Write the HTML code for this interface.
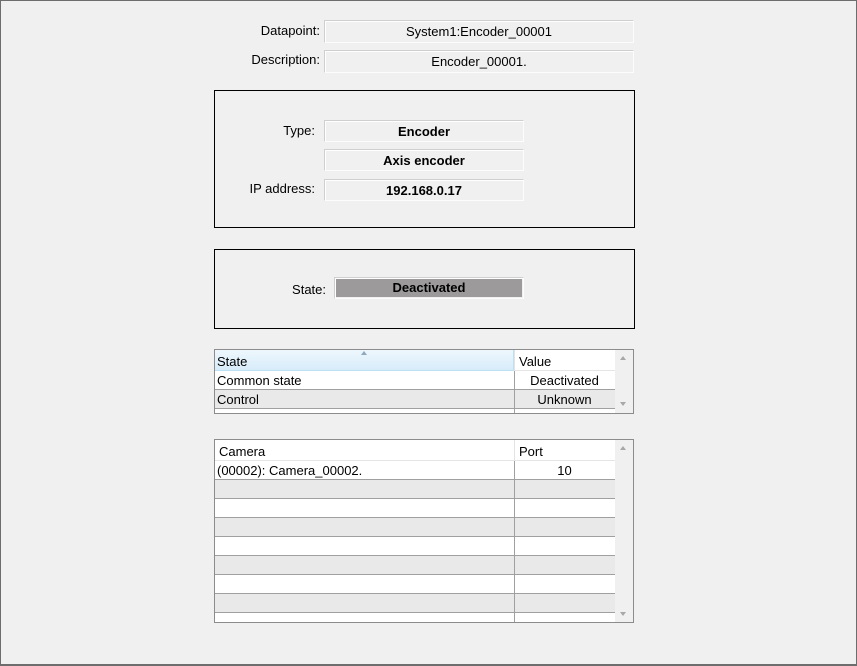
<!DOCTYPE html>
<html><head><style>
*{margin:0;padding:0;box-sizing:border-box}
body{width:857px;height:666px;background:#f0f0f0;font-family:"Liberation Sans",Arial,sans-serif;font-size:13px;color:#000;position:relative;overflow:hidden}
.frame{position:absolute;left:0;top:0;width:857px;height:666px;border:1px solid #6d6d6d;border-bottom-width:2px}
.a{position:absolute}
.lbl{position:absolute;text-align:right;font-size:13px}
.fld{position:absolute;border:1px solid #cfcfcf;border-right-color:#fcfcfc;border-bottom-color:#fcfcfc;box-shadow:inset 1px 1px 0 #fff;background:#f0f0f0;text-align:center;font-size:13px}
.b{font-weight:bold;font-size:13px}
.box{position:absolute;border:1px solid #000}
.tbl{position:absolute;border:1px solid #8c8c8c;background:#f0f0f0;overflow:hidden}
.row{position:absolute;left:0;width:400px;height:19px;border-bottom:1px solid #a0a0a0;font-size:13px;line-height:20px}
.c1{position:absolute;left:2px;top:0}
.c2{position:absolute;left:299px;width:100px;top:0;text-align:center;height:19px;border-left:1px solid #a0a0a0}
.sb{position:absolute;right:0;top:0;width:18px;bottom:0;background:#f0f0f0}
.arr{position:absolute;left:5px;width:0;height:0;border-left:3.5px solid transparent;border-right:3.5px solid transparent}
</style></head><body>
<div class="frame"></div>

<div class="lbl" style="left:220px;top:23px;width:100px">Datapoint:</div>
<div class="fld" style="left:324px;top:20px;width:310px;height:23px;line-height:21px">System1:Encoder_00001</div>
<div class="lbl" style="left:210px;top:52px;width:110px">Description:</div>
<div class="fld" style="left:324px;top:50px;width:310px;height:23px;line-height:21px">Encoder_00001.</div>

<div class="box" style="left:214px;top:90px;width:421px;height:138px"></div>
<div class="lbl" style="left:230px;top:123px;width:85px">Type:</div>
<div class="fld b" style="left:324px;top:120px;width:200px;height:22px;line-height:21px">Encoder</div>
<div class="fld b" style="left:324px;top:149px;width:200px;height:22px;line-height:21px">Axis encoder</div>
<div class="lbl" style="left:215px;top:181px;width:100px">IP address:</div>
<div class="fld b" style="left:324px;top:179px;width:200px;height:22px;line-height:21px">192.168.0.17</div>

<div class="box" style="left:214px;top:249px;width:421px;height:80px"></div>
<div class="lbl" style="left:256px;top:282px;width:70px">State:</div>
<div class="fld" style="left:334px;top:277px;width:190px;height:22px;padding:1px"><div class="b" style="background:#9c9a9a;height:18px;line-height:18px">Deactivated</div></div>

<div class="tbl" style="left:214px;top:349px;width:420px;height:65px">
  <div class="a" style="left:0;top:0;width:299px;height:21px;background:linear-gradient(#eef7fd,#d7ecf9);border-right:1px solid #bde0f5;border-bottom:1px solid #bde0f5"></div>
  <div class="a" style="left:2px;top:4px">State</div>
  <div class="arr" style="left:146px;top:1px;border-bottom:4px solid #8ea8bd"></div>
  <div class="a" style="left:299px;top:0;width:101px;height:21px;background:#fff;border-left:1px solid #e3e3e3;border-bottom:1px solid #e5e5e5"></div>
  <div class="a" style="left:304px;top:4px">Value</div>
  <div class="row" style="top:21px;background:#fff"><span class="c1">Common state</span><span class="c2">Deactivated</span></div>
  <div class="row" style="top:40px;background:#e9e9e9"><span class="c1">Control</span><span class="c2">Unknown</span></div>
  <div class="row" style="top:59px;background:#fff"><span class="c2"></span></div>
  <div class="sb"><div class="arr" style="top:6px;border-bottom:4px solid #a8a8a8"></div><div class="arr" style="bottom:7px;border-top:4px solid #a8a8a8"></div></div>
</div>

<div class="tbl" style="left:214px;top:439px;width:420px;height:184px">
  <div class="a" style="left:0;top:0;width:400px;height:21px;background:#fff;border-bottom:1px solid #e5e5e5"></div>
  <div class="a" style="left:299px;top:0;height:21px;border-left:1px solid #e3e3e3"></div>
  <div class="a" style="left:4px;top:4px">Camera</div>
  <div class="a" style="left:304px;top:4px">Port</div>
  <div class="row" style="top:21px;background:#fff"><span class="c1">(00002): Camera_00002.</span><span class="c2">10</span></div>
  <div class="row" style="top:40px;background:#e9e9e9"><span class="c2"></span></div>
  <div class="row" style="top:59px;background:#fff"><span class="c2"></span></div>
  <div class="row" style="top:78px;background:#e9e9e9"><span class="c2"></span></div>
  <div class="row" style="top:97px;background:#fff"><span class="c2"></span></div>
  <div class="row" style="top:116px;background:#e9e9e9"><span class="c2"></span></div>
  <div class="row" style="top:135px;background:#fff"><span class="c2"></span></div>
  <div class="row" style="top:154px;background:#e9e9e9"><span class="c2"></span></div>
  <div class="row" style="top:173px;background:#fff"><span class="c2"></span></div>
  <div class="sb"><div class="arr" style="top:6px;border-bottom:4px solid #a8a8a8"></div><div class="arr" style="bottom:6px;border-top:4px solid #a8a8a8"></div></div>
</div>
</body></html>
